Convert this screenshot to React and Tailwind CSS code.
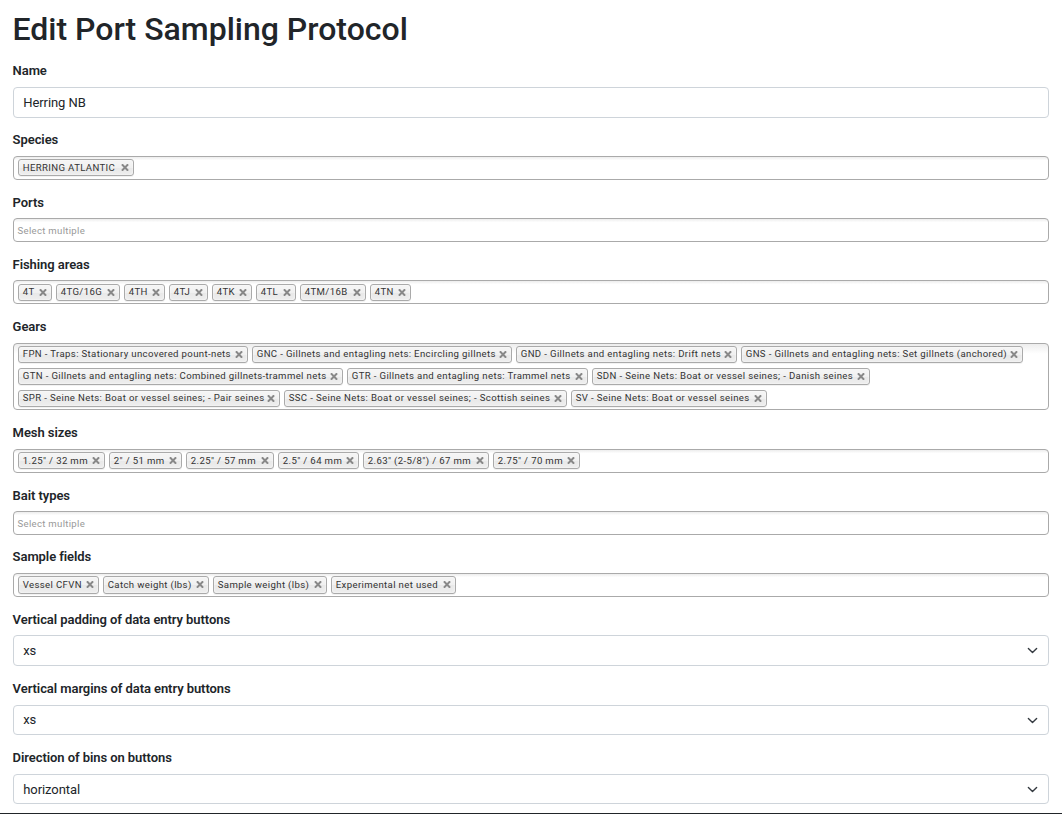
function Cross() {
  return (
    <svg className="absolute right-1 top-1 h-[7px] w-[8px]" viewBox="0 0 8 7" fill="none" stroke="#888" strokeWidth="2">
      <path d="M0.9 0.3 L7.1 6.7 M7.1 0.3 L0.9 6.7" />
    </svg>
  );
}

function Chip({ text, width, look }) {
  return (
    <li
      className={`relative shrink-0 whitespace-nowrap rounded-[3px] border border-[#aaa] bg-[linear-gradient(#f4f4f4_20%,#f0f0f0_50%,#e8e8e8_52%,#eee_100%)] pl-[3.75px] text-[9.6px] tracking-[0.36px] text-[#333] shadow-[inset_0_0_2px_#fff,0_1px_0_rgba(0,0,0,0.05)] ${look}`}
      style={{ width }}
    >
      {text}
      <Cross />
    </li>
  );
}

function Label({ children, low }) {
  return (
    <label className={`-ml-[0.4px] block h-[26px] text-[13px] font-semibold leading-[19px] tracking-[-0.07px] ${low ? "pt-px" : ""}`}>
      {children}
    </label>
  );
}

function MultiSelect({ label, low, rows = [], className = "h-6 mb-3 pt-[2px]", look = "h-[17px] leading-[15px]" }) {
  return (
    <div>
      <Label low={low}>{label}</Label>
      <div className={`flex flex-col gap-[5px] rounded-[4px] border border-[#aaa] bg-[linear-gradient(#eee_1%,#fff_15%)] pl-1 ${className}`}>
        {rows.length === 0 && (
          <span className="-ml-[0.5px] text-[9.6px] leading-5 tracking-[0.3px] text-[#999]">Select multiple</span>
        )}
        {rows.map((row, i) => (
          <ul key={i} className="flex gap-1">
            {row.map(([text, width]) => (
              <Chip key={text} text={text} width={width} look={look} />
            ))}
          </ul>
        ))}
      </div>
    </div>
  );
}

function Field({ label, low, value, select, className = "h-[30px] mb-[13px]" }) {
  return (
    <div>
      <Label low={low}>{label}</Label>
      <div className={`flex items-center justify-between rounded-[4px] border border-[#ced4da] bg-white pl-[9.25px] pr-[10px] text-[13px] tracking-[-0.08px] ${className}`}>
        <span>{value}</span>
        {select && (
          <svg className="h-[11px] w-[11px]" viewBox="0 0 16 16" fill="none" stroke="#343a40" strokeWidth="2" strokeLinecap="round" strokeLinejoin="round">
            <path d="m2 5 6 6 6-6" />
          </svg>
        )}
      </div>
    </div>
  );
}

const areas = [[["4T", 34], ["4TG/16G", 64], ["4TH", 41], ["4TJ", 39], ["4TK", 40], ["4TL", 40], ["4TM/16B", 66], ["4TN", 41]]];

const gears = [
  [
    ["FPN - Traps: Stationary uncovered pount-nets", 230],
    ["GNC - Gillnets and entagling nets: Encircling gillnets", 260],
    ["GND - Gillnets and entagling nets: Drift nets", 221],
    ["GNS - Gillnets and entagling nets: Set gillnets (anchored)", 282],
  ],
  [
    ["GTN - Gillnets and entagling nets: Combined gillnets-trammel nets", 325],
    ["GTR - Gillnets and entagling nets: Trammel nets", 241],
    ["SDN - Seine Nets: Boat or vessel seines; - Danish seines", 278],
  ],
  [
    ["SPR - Seine Nets: Boat or vessel seines; - Pair seines", 262],
    ["SSC - Seine Nets: Boat or vessel seines; - Scottish seines", 283],
    ["SV - Seine Nets: Boat or vessel seines", 196],
  ],
];

const meshes = [[["1.25\" / 32 mm", 87], ["2\" / 51 mm", 73], ["2.25\" / 57 mm", 88], ["2.5\" / 64 mm", 81], ["2.63\" (2-5/8\") / 67 mm", 126], ["2.75\" / 70 mm", 87]]];

const samples = [[["Vessel CFVN", 81], ["Catch weight (lbs)", 106], ["Sample weight (lbs)", 114], ["Experimental net used", 125]]];

export default function App() {
  return (
    <main className="flex h-[814px] flex-col overflow-hidden border-b border-[#212529] bg-white pl-[13px] pr-[13px] font-[Roboto,sans-serif] text-[#212529]">
      <h1 className="-ml-[0.5px] h-[61px] pt-[10px] text-[32px] font-medium leading-[39px]">Edit Port Sampling Protocol</h1>
      <Field label="Name" value="Herring NB" className="h-[31px] mb-3" />
      <MultiSelect label="Species" rows={[[["HERRING ATLANTIC", 116]]]} />
      <MultiSelect label="Ports" low />
      <MultiSelect label="Fishing areas" low rows={areas} className="h-6 mb-[13px] pt-[3px]" look="h-[17px] leading-[13px]" />
      <MultiSelect label="Gears" rows={gears} className="h-[67px] mb-[13px] pt-[2px]" look="h-[17px] leading-[13px]" />
      <MultiSelect label="Mesh sizes" rows={meshes} />
      <MultiSelect label="Bait types" low />
      <MultiSelect label="Sample fields" rows={samples} look="h-[18px] leading-[15px]" />
      <Field label="Vertical padding of data entry buttons" low value="xs" select className="h-[31px] mb-[13px]" />
      <Field label="Vertical margins of data entry buttons" value="xs" select />
      <Field label="Direction of bins on buttons" value="horizontal" select className="h-[30px] pt-px" />
    </main>
  );
}
